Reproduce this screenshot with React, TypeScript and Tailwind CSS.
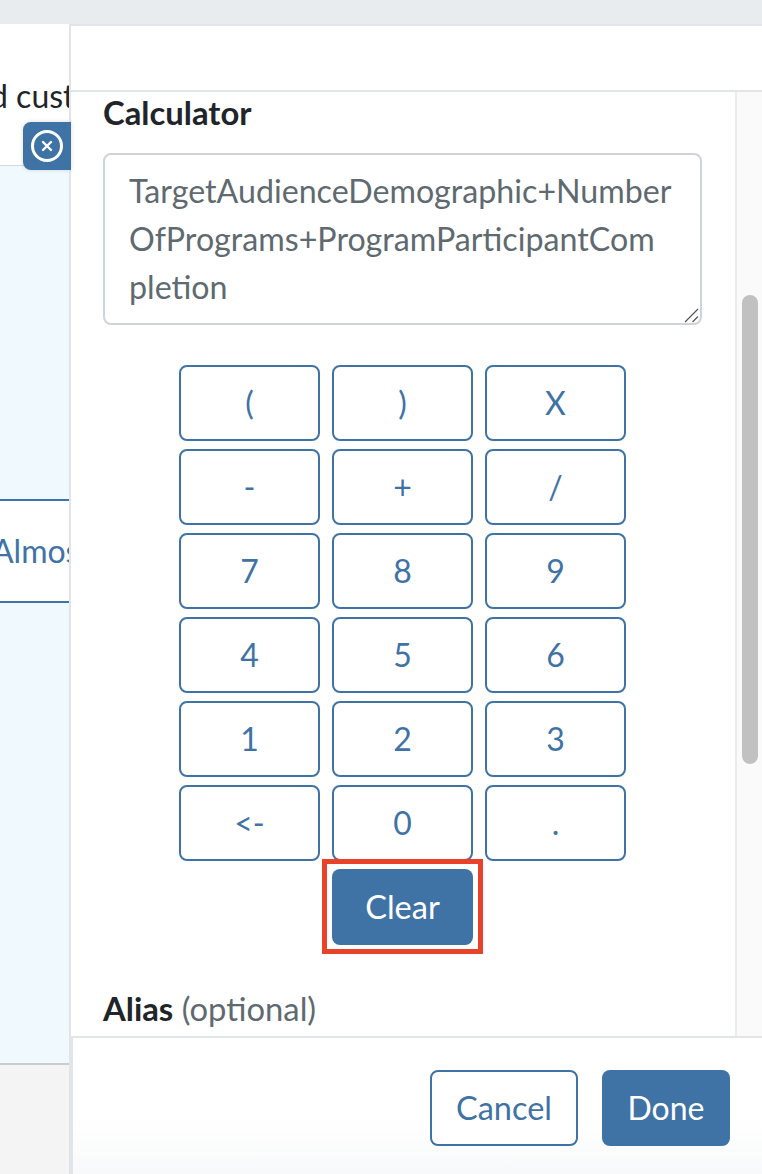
const keys = ['(', ')', 'X', '-', '+', '/', '7', '8', '9', '4', '5', '6', '1', '2', '3', '<-', '0', '.'];

const formula = 'TargetAudienceDemographic+NumberOfPrograms+ProgramParticipantCompletion';

export default function App() {
  return (
    <div className="flex h-[1174px] w-[762px] flex-col overflow-hidden bg-white font-['Lato',sans-serif]">
      <div className="h-6 shrink-0 bg-[#e9ecee]" />
      <div className="flex min-h-0 flex-1">
        {/* Page behind the drawer */}
        <div className="relative z-10 flex w-[69px] shrink-0 flex-col">
          <div className="h-[142px] shrink-0 overflow-hidden border-b border-[#d5dadd] bg-white pt-[52px]">
            <div className="ml-[-10px] whitespace-nowrap text-[32px] leading-[40px] text-[#212529]">d custom</div>
          </div>
          <div className="h-[333px] shrink-0 bg-[#f0f9fd]" />
          <div className="flex h-[104px] shrink-0 items-center overflow-hidden border-y-2 border-[#3f73a5] bg-white">
            <span className="ml-[-8px] whitespace-nowrap text-[32px] leading-[40px] text-[#3f73a5]">Almost</span>
          </div>
          <div className="h-[460px] shrink-0 bg-[#f0f9fd]" />
          <div className="flex-1 border-t-2 border-[#cccccc] bg-[#f4f4f4]" />
          <div className="absolute left-[23px] top-[98px] flex h-12 w-12 items-center rounded-l-lg bg-[#3f73a5] pl-2 shadow-[0_0_4px_rgba(0,0,0,0.15)]">
            <div className="flex h-8 w-8 items-center justify-center rounded-full border-[3px] border-white">
              <svg viewBox="0 0 12 12" className="h-3 w-3" fill="none" stroke="white" strokeWidth="2.4" strokeLinecap="round">
                <path d="M2 2l8 8M10 2l-8 8" />
              </svg>
            </div>
          </div>
        </div>

        {/* Drawer */}
        <div className="flex min-w-0 flex-1 flex-col border-l-2 border-t-2 border-[#e1e5ea] bg-white">
          <div className="h-[66px] shrink-0 border-b-2 border-[#e1e5ea]" />
          <div className="flex min-h-0 flex-1">
            <div className="relative w-[664px] shrink-0 overflow-hidden pl-[32px] pr-[32px]">
              <h2 className="mt-px text-[32.8px] font-bold leading-[40px] text-[#212529]">Calculator</h2>
              <div className="relative mt-5 h-[172px] w-[599px]">
                <textarea
                  readOnly
                  defaultValue={formula}
                  className="block h-full w-full resize-none rounded-lg border-2 border-[#ced4da] bg-white py-3 pl-6 pr-[27.5px] text-[32.2px] leading-[48px] text-[#5f6a70] outline-none"
                />
                <svg viewBox="0 0 16 16" className="absolute bottom-[2px] right-[2px] h-4 w-4" fill="none" stroke="#555555" strokeWidth="1.2">
                  <path d="M1 15L14 2M8.5 15L14 9.5" />
                </svg>
              </div>
              <div className="ml-[76px] mt-10 grid w-[447px] grid-cols-[141px_141px_141px] gap-x-3 gap-y-2">
                {keys.map((k) => (
                  <button
                    key={k}
                    className="flex h-[76px] items-center justify-center rounded-lg border-2 border-[#3f73a5] bg-white text-[32px] text-[#3f73a5]"
                  >
                    {k}
                  </button>
                ))}
                <div className="relative col-start-2">
                  <button className="flex h-[76px] w-full items-center justify-center rounded-lg bg-[#3f73a5] text-[32.5px] text-white">
                    Clear
                  </button>
                  <div className="absolute inset-x-[-10px] bottom-[-9px] top-[-10px] border-[5px] border-[#e8432a]" />
                </div>
              </div>
              <div className="mt-[44px] text-[32.8px] leading-[40px] text-[#5f6a70]">
                <span className="font-bold text-[#212529]">Alias</span> (optional)
              </div>
            </div>
            <div className="relative flex-1 border-l-2 border-[#e9ebee] bg-[#fafafa]">
              <div className="ml-[5px] mt-[203px] h-[469px] w-4 rounded-full bg-[#c1c1c1]" />
            </div>
          </div>
          <div className="flex h-[138px] shrink-0 items-start justify-end gap-6 border-l-2 border-t-2 border-[#e1e5ea] bg-gradient-to-b from-white from-60% to-[#f8f9fa] pr-8 pt-8">
            <button className="flex h-[76px] w-[148px] items-center justify-center rounded-lg border-2 border-[#3f73a5] bg-white text-[32.5px] text-[#3f73a5]">
              Cancel
            </button>
            <button className="flex h-[76px] w-[128px] items-center justify-center rounded-lg bg-[#3f73a5] text-[32px] text-white">
              Done
            </button>
          </div>
        </div>
      </div>
    </div>
  );
}
